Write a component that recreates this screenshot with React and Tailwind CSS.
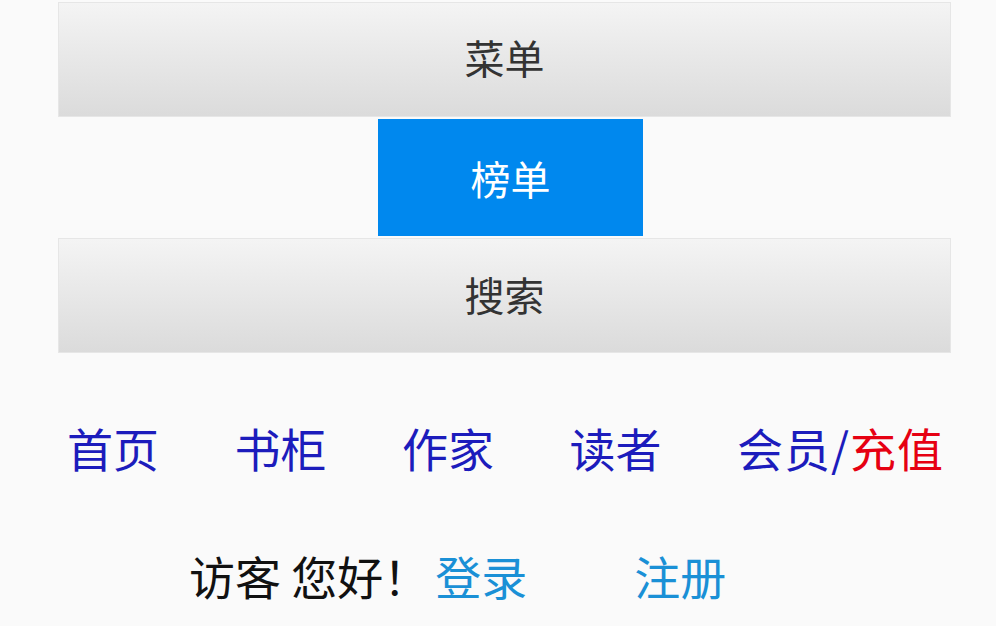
export default function App() {
  const font = { fontFamily: '"Noto Sans CJK SC", "Noto Sans", sans-serif' };
  return (
    <div className="w-[996px] h-[626px] bg-[#fafafa] overflow-hidden" style={font}>
      <div className="pt-[2px] pl-[58px] pr-[45px] flex flex-col">
        <div className="h-[115px] pb-[6px] flex items-center justify-center bg-gradient-to-b from-[#f4f4f4] to-[#dbdbdb] border border-[#e6e6e6] text-[40px] text-[#333333]">
          菜单
        </div>
        <div className="mt-[2px] ml-[320px] w-[265px] h-[117px] flex items-center justify-center bg-[#0088ee] text-[40px] text-white">
          榜单
        </div>
        <div className="mt-[2px] h-[115px] pb-[4px] flex items-center justify-center bg-gradient-to-b from-[#f4f4f4] to-[#dbdbdb] border border-[#e6e6e6] text-[40px] text-[#333333]">
          搜索
        </div>
      </div>
      <div className="mt-[64px] pl-[67px] pr-[52px] flex justify-between items-center h-[60px] text-[46px] leading-none text-[#1c1cbc]">
        <span>首页</span>
        <span>书柜</span>
        <span>作家</span>
        <span>读者</span>
        <span className="tracking-[1px]">会员/<span className="text-[#e60012]">充值</span></span>
      </div>
      <div className="mt-[68px] pl-[189px] flex items-center h-[60px] text-[46px] leading-none">
        <span className="text-[#111111]">访客 您好！</span>
        <span className="ml-[6px] text-[#1a90d6]">登录</span>
        <span className="ml-[107px] text-[#1a90d6]">注册</span>
      </div>
    </div>
  );
}
